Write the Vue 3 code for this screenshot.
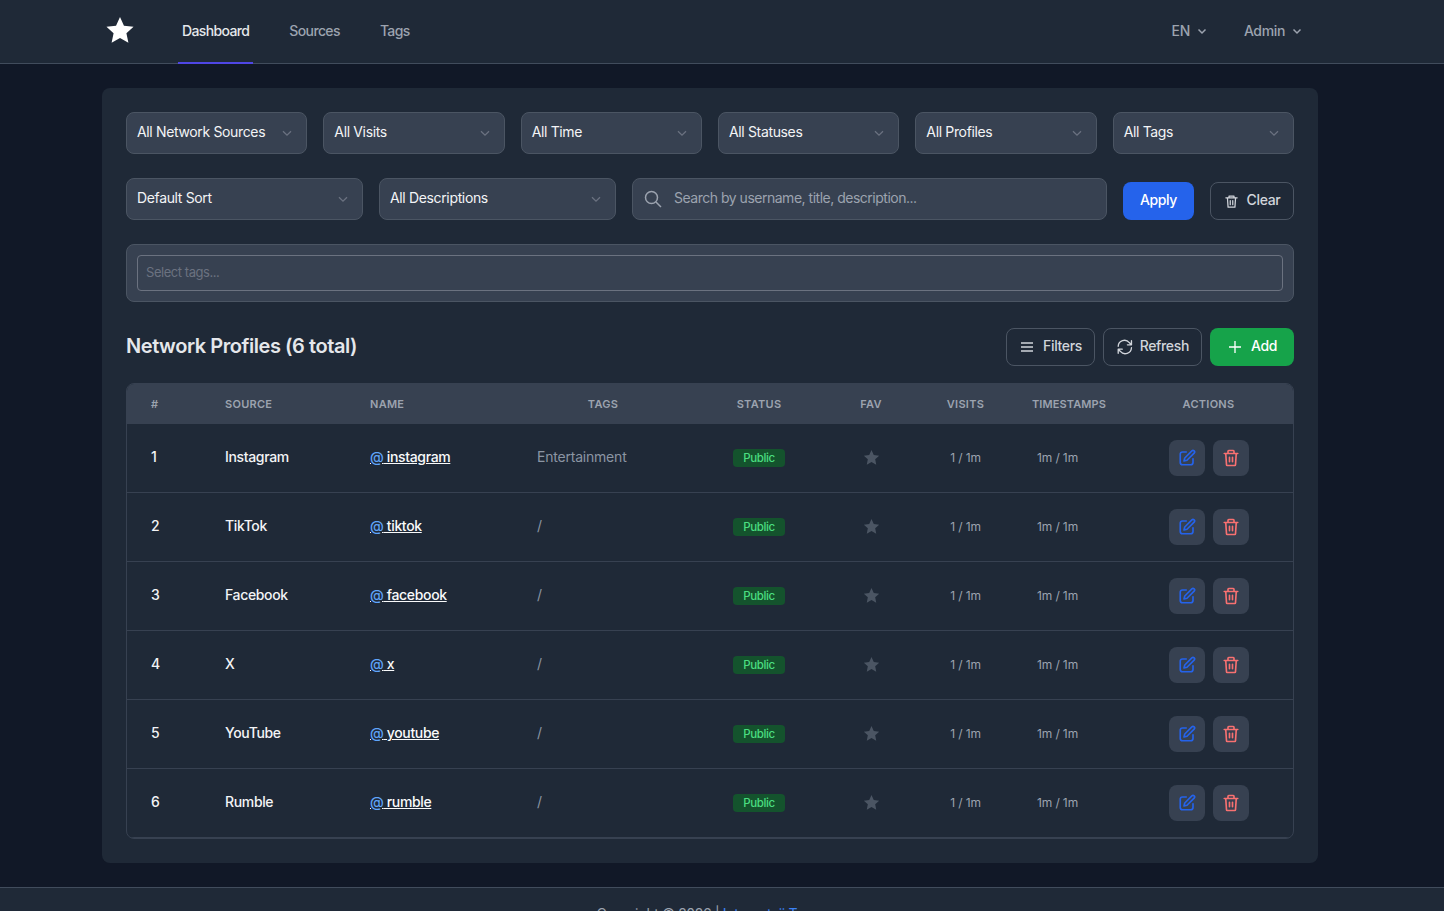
<script setup>
const row1 = ['All Network Sources', 'All Visits', 'All Time', 'All Statuses', 'All Profiles', 'All Tags']
const rows = [
  { n: 1, source: 'Instagram', name: 'instagram', tags: 'Entertainment' },
  { n: 2, source: 'TikTok', name: 'tiktok', tags: '/' },
  { n: 3, source: 'Facebook', name: 'facebook', tags: '/' },
  { n: 4, source: 'X', name: 'x', tags: '/' },
  { n: 5, source: 'YouTube', name: 'youtube', tags: '/' },
  { n: 6, source: 'Rumble', name: 'rumble', tags: '/' }
]
</script>

<template>
  <div class="page">
    <header class="top">
      <div class="top-in">
        <svg class="logo" width="28" height="28" viewBox="0 0 24 24" fill="#fff"><path d="M12 .8l3.4 7.6 8.2.9-6.1 5.500 1.700 8.100L12 18.800l-7.200 4.100 1.700-8.100L.4 9.300l8.200-.9z"/></svg>
        <nav class="nav">
          <a class="nav-a on">Dashboard</a>
          <a class="nav-a">Sources</a>
          <a class="nav-a">Tags</a>
        </nav>
        <div class="top-r">
          <span class="drop">EN <svg width="10" height="10" viewBox="0 0 10 10" fill="none" stroke="currentColor" stroke-width="1.500"><path d="M1.500 3.500L5 7l3.500-3.500"/></svg></span>
          <span class="drop">Admin <svg width="10" height="10" viewBox="0 0 10 10" fill="none" stroke="currentColor" stroke-width="1.500"><path d="M1.500 3.500L5 7l3.500-3.500"/></svg></span>
        </div>
      </div>
    </header>

    <main class="panel">
      <div class="grid6">
        <div v-for="s in row1" :key="s" class="sel">
          <span>{{ s }}</span>
          <svg width="12" height="12" viewBox="0 0 12 12" fill="none" stroke="#6b7280" stroke-width="1.300"><path d="M2 4.200l4 4 4-4"/></svg>
        </div>
      </div>

      <div class="row2">
        <div class="sel"><span>Default Sort</span><svg width="12" height="12" viewBox="0 0 12 12" fill="none" stroke="#6b7280" stroke-width="1.300"><path d="M2 4.200l4 4 4-4"/></svg></div>
        <div class="sel"><span>All Descriptions</span><svg width="12" height="12" viewBox="0 0 12 12" fill="none" stroke="#6b7280" stroke-width="1.300"><path d="M2 4.200l4 4 4-4"/></svg></div>
        <div class="search">
          <svg width="18" height="18" viewBox="0 0 18 18" fill="none" stroke="#9ca3af" stroke-width="1.500"><circle cx="7.500" cy="7.500" r="6"/><path d="M12 12l5 5"/></svg>
          <span>Search by username, title, description...</span>
        </div>
        <button class="btn apply"><span>Apply</span></button>
        <button class="btn ghost clear">
          <svg width="15" height="15" viewBox="0 0 24 24" fill="none" stroke="currentColor" stroke-width="2" stroke-linecap="round" stroke-linejoin="round"><path d="M3 6h18M8 6V3.500h8V6M5.500 6l1 15h11l1-15M10 10.500v6.500M14 10.500v6.500"/></svg>
          <span>Clear</span>
        </button>
      </div>

      <div class="tagsbox"><div class="tagsin">Select tags...</div></div>

      <div class="headrow">
        <h2>Network Profiles (6 total)</h2>
        <div class="acts">
          <button class="btn ghost">
            <svg width="16" height="16" viewBox="0 0 24 24" fill="none" stroke="currentColor" stroke-width="2.200"><path d="M3 6h18M3 12h18M3 18h18"/></svg>
            <span>Filters</span>
          </button>
          <button class="btn ghost refresh">
            <svg width="22" height="22" viewBox="0 0 24 24" fill="none" stroke="currentColor" stroke-width="1.800" stroke-linecap="round" stroke-linejoin="round"><path d="M3 11a8.500 8.500 0 0 1 15-5l2.500 2.500M21 3.500V9h-5.500M21 13a8.500 8.500 0 0 1-15 5l-2.500-2.500M3 20.500V15h5.500"/></svg>
            <span>Refresh</span>
          </button>
          <button class="btn add">
            <svg width="16" height="16" viewBox="0 0 24 24" fill="none" stroke="currentColor" stroke-width="2"><path d="M12 3v18M3 12h18"/></svg>
            <span>Add</span>
          </button>
        </div>
      </div>

      <div class="tablewrap">
        <table>
          <colgroup>
            <col class="w1"><col class="w2"><col class="w3"><col class="w4"><col class="w5"><col class="w6"><col class="w7"><col class="w8"><col>
          </colgroup>
          <thead>
            <tr>
              <th>#</th><th>SOURCE</th><th>NAME</th><th class="c">TAGS</th><th class="c">STATUS</th><th class="c">FAV</th><th class="c">VISITS</th><th class="c">TIMESTAMPS</th><th class="c">ACTIONS</th>
            </tr>
          </thead>
          <tbody>
            <tr v-for="r in rows" :key="r.n">
              <td class="up">{{ r.n }}</td>
              <td class="up">{{ r.source }}</td>
              <td class="up"><a class="at"><span>@</span> {{ r.name }}</a></td>
              <td class="up tg">{{ r.tags }}</td>
              <td class="c lift"><span class="badge">Public</span></td>
              <td class="c lift"><svg class="favstar" width="17" height="17" viewBox="0 0 24 24" fill="#4b5563"><path d="M12 1.500l3.200 7 7.600.9-5.600 5.200 1.500 7.600L12 18.400l-6.700 3.800 1.500-7.600L1.200 9.400l7.600-.9z"/></svg></td>
              <td class="c sm lift">1 / 1m</td>
              <td class="sm ts">1m / 1m</td>
              <td class="c">
                <div class="btns">
                  <span class="ib">
                    <svg width="18" height="18" viewBox="0 0 24 24" fill="none" stroke="#2563eb" stroke-width="2.200" stroke-linecap="round" stroke-linejoin="round"><path d="M11 4H6a3 3 0 0 0-3 3v11a3 3 0 0 0 3 3h11a3 3 0 0 0 3-3v-5"/><path d="M18.500 2.600a2.100 2.100 0 0 1 3 3L12 15l-4 1 1-4z"/></svg>
                  </span>
                  <span class="ib">
                    <svg width="18" height="18" viewBox="0 0 24 24" fill="none" stroke="#f87171" stroke-width="2.200" stroke-linecap="round" stroke-linejoin="round"><path d="M3 6h18M8 6V3a1 1 0 0 1 1-1h6a1 1 0 0 1 1 1v3M5 6l1 15a1 1 0 0 0 1 1h10a1 1 0 0 0 1-1l1-15M10 11v6M14 11v6"/></svg>
                  </span>
                </div>
              </td>
            </tr>
          </tbody>
        </table>
      </div>
    </main>

    <footer class="foot"><div class="foot-in">Copyright © 2026 | <a>Internetaii Team</a></div></footer>
  </div>
</template>

<style>
html, body { margin: 0; background: #111827; overflow: hidden; }
</style>

<style scoped>
.page { font-family: Inter, "Noto Sans", sans-serif; font-size: 14px; letter-spacing: -0.025em; color: #e5e7eb; background: #111827; height: 911px; overflow: hidden; }
.top { height: 64px; box-sizing: border-box; background: #1f2937; border-bottom: 1px solid #414c5c; padding-right: 24px; }
.top-in { width: 1216px; margin: 0 auto; height: 100%; display: flex; align-items: center; }
.logo { margin-left: 4px; margin-top: -3px; }
.nav { display: flex; height: 100%; margin-left: 44px; gap: 32px; }
.nav-a { display: flex; align-items: center; padding: 0 4px 2px; color: #9ca3af; font-weight: 500; letter-spacing: -0.045em; height: 64px; box-sizing: border-box; border-bottom: 2px solid transparent; }
.nav-a.on { color: #e5e7eb; border-bottom-color: #4f46e5; }
.top-r { margin-left: auto; display: flex; gap: 37px; color: #9ca3af; font-weight: 500; margin-right: 16px; padding-bottom: 2px; }
.drop { display: flex; align-items: center; gap: 7px; }

.panel { width: 1216px; box-sizing: border-box; margin: 24px 228px 24px 102px; background: #1f2937; border-radius: 8px; padding: 24px; }
.grid6 { display: grid; grid-template-columns: repeat(6, 1fr); gap: 16px; }
.sel { height: 42px; box-sizing: border-box; background: #374151; border: 1px solid #4b5563; border-radius: 8px; display: flex; align-items: center; justify-content: space-between; padding: 0 13px 0 10px; color: #f3f4f6; min-width: 0; }
.sel span, .search span { position: relative; top: -1.500px; }
.row2 { display: grid; grid-template-columns: 237px 237px 1fr 71px 84px; gap: 16px; margin-top: 24px; align-items: end; }
.search { height: 42px; box-sizing: border-box; background: #374151; border: 1px solid #4b5563; border-radius: 8px; display: flex; align-items: center; gap: 12px; padding: 0 11px; color: #9ca3af; letter-spacing: -0.035em; }
.btn { height: 38px; box-sizing: border-box; display: inline-flex; align-items: center; justify-content: center; gap: 8px; border-radius: 8px; font: inherit; font-weight: 500; letter-spacing: inherit; border: 1px solid transparent; padding: 0 12px; }
.btn span { position: relative; top: -1.500px; }
.apply { background: #2563eb; color: #fff; width: 71px; padding: 0; }
.ghost { background: transparent; border-color: #4b5563; color: #d1d5db; }
.clear { width: 84px; padding: 0; }
.add { background: #16a34a; color: #fff; width: 84px; padding: 0; }
.refresh { gap: 6px; }
.tagsbox { margin-top: 24px; height: 58px; box-sizing: border-box; background: #374151; border: 1px solid #4b5563; border-radius: 8px; padding: 10px; }
.tagsin { height: 36px; box-sizing: border-box; border: 1px solid #6b7280; border-radius: 4px; display: flex; align-items: center; padding: 0 8px 2px; color: #6b7280; font-size: 13px; letter-spacing: -0.035em; }
.headrow { display: flex; justify-content: space-between; align-items: center; margin-top: 26px; height: 38px; }
h2 { margin: 0 0 2px; font-size: 20px; font-weight: 600; letter-spacing: -0.022em; color: #e5e7eb; }
.acts { display: flex; gap: 8px; }
.acts .btn:nth-child(1) { width: 89px; }
.acts .btn:nth-child(2) { width: 99px; }
.tablewrap { margin-top: 17px; border: 1px solid #374151; border-radius: 8px; overflow: hidden; }
table { width: 100%; border-collapse: separate; border-spacing: 0; table-layout: fixed; }
.w1 { width: 74px; } .w2 { width: 145px; } .w3 { width: 167px; } .w4 { width: 180px; } .w5 { width: 132px; } .w6 { width: 92px; } .w7 { width: 97px; } .w8 { width: 110px; }
thead tr { background: #374151; }
th { height: 40px; padding: 0 0 0 24px; text-align: left; font-size: 11px; font-weight: 600; color: #9ca3af; letter-spacing: 0.025em; }
th:nth-child(8) { letter-spacing: 0.01em; }
th.c, td.c { padding: 0; text-align: center; }
td { height: 69px; box-sizing: border-box; padding: 0 0 0 24px; border-bottom: 1px solid #374151; font-weight: 500; color: #f3f4f6; vertical-align: middle; }
td.up { padding-bottom: 3px; }
td.c.lift { padding-bottom: 2px; }
td.ts { padding-bottom: 2px; }
.at { color: #f9fafb; text-decoration: underline; }
.at span { color: #60a5fa; }
td.tg { color: #8b95a3; font-weight: 400; letter-spacing: -0.015em; }
.badge { display: inline-block; background: #14532d; color: #4ade80; font-size: 11.500px; line-height: 18px; padding: 0 10.500px; border-radius: 4px; vertical-align: middle; }
.favstar { display: block; margin: 0 auto; }
td.sm { font-size: 12px; color: #9ca3af; font-weight: 400; letter-spacing: -0.01em; }
td.ts { padding-left: 23px; }
.btns { display: flex; gap: 8px; justify-content: center; }
.ib { width: 36px; height: 36px; border-radius: 8px; background: #374151; display: flex; align-items: center; justify-content: center; }
.foot { height: 80px; box-sizing: border-box; background: #1f2937; border-top: 1px solid #414c5c; padding: 17px 24px 0 0; color: #9ca3af; }
.foot-in { text-align: center; white-space: nowrap; }
.foot a { color: #3b82f6; }
</style>
